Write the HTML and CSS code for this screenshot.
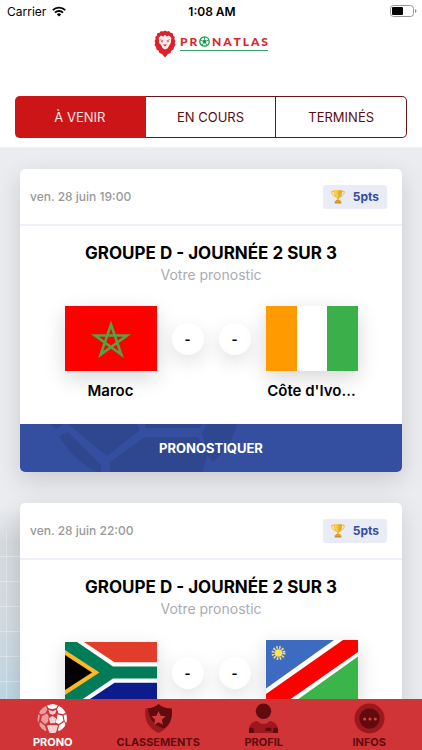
FILE: index.html
```html
<!DOCTYPE html>
<html lang="fr">
<head>
<meta charset="utf-8">
<meta name="viewport" content="width=device-width, initial-scale=1">
<title>Pronatlas</title>
<link rel="stylesheet" href="styles.css">
</head>
<body>
<svg class="defs" aria-hidden="true">
  <symbol id="trophy" viewBox="0 0 15 15">
    <path d="M3.600 2H.8c0 3 1 5 4 5.600M11.400 2h2.800c0 3-1 5-4 5.600" fill="none" stroke="#e9b83a" stroke-width="1"/>
    <path d="M3 .7h9c0 4.500-1 7.800-3.500 8.800v2h-2v-2C4 8.500 3 5.200 3 .700z" fill="#f7c331"/>
    <path d="M8 .7h4c0 4.500-1 7.800-3.500 8.800v2H8z" fill="#e8ad2c"/>
    <path d="M5.500 11.200h4l1 1.500h-6z" fill="#d99b26"/>
    <path d="M4 12.600h7V15H4z" fill="#c7912f"/>
    <path d="M5 1.700c.1 3 .6 4.700 1.500 5.800" fill="none" stroke="#fde08a" stroke-width=".8"/>
  </symbol>
</svg>

<header class="top">
  <div class="status">
    <span class="carrier">Carrier
      <svg class="wifi" viewBox="0 0 14 11" aria-hidden="true"><path d="M.8 4.200a8.800 8.800 0 0 1 12.400 0M3 6.600a5.700 5.700 0 0 1 8 0" fill="none" stroke="#000" stroke-width="1.900"/><path d="M7 10.600L4.800 8.400a3.100 3.100 0 0 1 4.400 0z"/></svg>
    </span>
    <span class="clock">1:08 AM</span>
    <svg class="battery" viewBox="0 0 27 12" aria-hidden="true"><rect x=".5" y=".5" width="23" height="11" rx="3" fill="#fff" stroke="#999"/><rect x="2" y="2" width="11" height="8" rx="1"/><path d="M25 4v4c2-.7 2-3.300 0-4z" fill="#999"/></svg>
  </div>
  <div class="logo">
    <svg class="lion" viewBox="0 0 22 28" aria-hidden="true">
      <path d="M11 .5L13 1.500 15 1 16.500 2.800 18.800 3.300 19 5.500 20.800 7 20.300 9 21.500 11 20.700 13 21.500 15 20 17 19.500 19.500 17.500 20.500 16.500 23 14 24 11 27.500 8 24 5.500 23 4.500 20.500 2.500 19.500 2 17 .5 15 1.300 13 .5 11 1.700 9 1.200 7 3 5.500 3.200 3.300 5.500 2.800 7 1 9 1.500z" fill="#dc2128"/>
      <path d="M7 5.500l2.200 1L11 4.800l1.800 1.700 2.200-1 2.300 2.200-.5 5.300-1.500 2.200-1.500 3L11 19.500l-2.300-1.300-1.500-3L5.200 13l-.5-5.300z" fill="#fbeeee"/>
      <path d="M6 9.600l3.500 1.300M16 9.600l-3.500 1.300" stroke="#dc2128" stroke-width=".6" fill="none"/>
      <path d="M7 11.300l2 .6M15 11.300l-2 .6" stroke="#5d9e78" stroke-width="1"/>
      <path d="M9 14.500h4l-2 2z" fill="#dc2128"/>
    </svg>
    <span class="wordmark"><span>P</span><span>R</span><svg class="logo-ball" viewBox="0 0 11 11" role="img" aria-label="O"><circle cx="5.500" cy="5.500" r="4.700" fill="#fff" stroke="#159a50" stroke-width="1.300"/><path d="M5.500 3.200l2.200 1.600-.8 2.600H4.100l-.8-2.600z" fill="#159a50"/><path d="M5.500 3.200V1M7.700 4.800l2.200-.7M6.900 7.400l1.400 2M4.100 7.400l-1.400 2M3.300 4.800l-2.200-.7" stroke="#159a50" stroke-width=".9"/></svg><span>N</span><span>A</span><span>T</span><span>L</span><span>A</span><span>S</span></span>
  </div>
  <div class="tabs">
    <button class="tab active" type="button">À VENIR</button>
    <button class="tab" type="button">EN COURS</button>
    <button class="tab" type="button">TERMINÉS</button>
  </div>
</header>

<main class="feed">
  <article class="card">
    <div class="card-head">
      <time>ven. 28 juin 19:00</time>
      <span class="points"><svg class="trophy" aria-hidden="true"><use href="#trophy"/></svg>5pts</span>
    </div>
    <div class="card-body">
      <h2>GROUPE D - JOURNÉE 2 SUR 3</h2>
      <p class="sub">Votre pronostic</p>
      <div class="match">
        <svg class="flag" viewBox="0 0 92 65" role="img" aria-label="Drapeau du Maroc"><path fill="#fe0000" d="M0 0h92v65H0z"/><path d="M46 18.500L56.300 48.500 30 29.500h32L35.700 48.500z" fill="none" stroke="#53a245" stroke-width="2.600"/></svg>
        <span class="score">-</span>
        <span class="score">-</span>
        <svg class="flag" viewBox="0 0 92 65" role="img" aria-label="Drapeau de la Côte d'Ivoire"><path fill="#fff" d="M0 0h92v65H0z"/><path fill="#ff9a00" d="M0 0h31v65H0z"/><path fill="#3bb04a" d="M61 0h31v65H61z"/></svg>
      </div>
      <div class="names"><span>Maroc</span><span>Côte d'Ivo...</span></div>
    </div>
    <button class="bet" type="button">
      <svg class="watermark" viewBox="0 0 226 49" aria-hidden="true"><path d="M30 0h14l-8 5zM48 0h69l3 6-33 26zM125 0h58l-3 4h-54zM125 13h52l5 5 5 15-5 16H90V38zM187 0h30c-3 15-12 28-24 38l-6-7-5-22zM39 12l9-4 33 33v8h-2C62 41 48 28 39 12z"/></svg>
      <span>PRONOSTIQUER</span>
    </button>
  </article>

  <article class="card">
    <div class="card-head">
      <time>ven. 28 juin 22:00</time>
      <span class="points"><svg class="trophy" aria-hidden="true"><use href="#trophy"/></svg>5pts</span>
    </div>
    <div class="card-body">
      <h2>GROUPE D - JOURNÉE 2 SUR 3</h2>
      <p class="sub">Votre pronostic</p>
      <div class="match">
        <svg class="flag short" viewBox="0 0 92 61" role="img" aria-label="Drapeau de l'Afrique du Sud">
          <path fill="#fff" d="M0 0h92v61H0z"/><path fill="#e23d2b" d="M19 0h73v20.300H49.500z"/><path fill="#0c1c8c" d="M19 61h73V40.700H49.500z"/>
          <path fill="#007c59" d="M0 0h12l36 24.400h44v12.200H48L12 61H0z"/><path fill="#fcb827" d="M0 8l34.500 22.500L0 53z"/><path fill="#000" d="M0 13l27 17.500L0 48z"/>
        </svg>
        <span class="score">-</span>
        <span class="score">-</span>
        <svg class="flag" viewBox="0 0 92 65" role="img" aria-label="Drapeau de la Namibie">
          <path fill="#fff" d="M0 0h92v65H0z"/><path fill="#3d6bc2" d="M0 0h68L0 48.500z"/><path fill="#3bb54a" d="M92 65V16.500L24 65z"/><path fill="#fe0000" d="M77 0h15v12L16 65H0V54z"/>
          <circle cx="12.500" cy="13" r="5.500" fill="none" stroke="#f4dc72" stroke-width="3" stroke-dasharray="1.500 1.380"/><circle cx="12.500" cy="13" r="3.800" fill="#ffe05a"/>
        </svg>
      </div>
    </div>
  </article>
</main>

<nav class="bottom">
  <a class="item current" href="#prono">
    <svg viewBox="0 0 32 32" aria-hidden="true">
      <g fill="#fff">
        <path d="M10.500 2.500L16 1l5.500 1.300-1.500 2.900-4 1.300-4.500-1.300z"/><path d="M22.600 3c3 1.400 5.500 4 7 7l-2.400 1.700-5-1.200-1.600-4.300z" />
        <path d="M20.800 11.700l5.500 1.400 1 5.200-4.600 3.400-4-1.700 2-4.500z"/><path d="M30.200 11.500c1 3 1 6.200-.1 9.300l-1.700-2.800-.9-5z"/><path d="M23 23l5.200-3.700 1.100 3.500c-1.400 2.800-3.700 4.900-6.500 6.100L21.500 28z"/>
      </g>
      <g fill="#fff" opacity=".78"><path d="M12 22.800h8l1.700.8-1.500 4.800-1 2.200c-2.100.4-4.200.4-6.300 0l-1-2.200-1.500-4.800z"/><path d="M16 13.300l3.800 2.500-1.500 5h-4.600l-1.500-5z"/><path d="M11.800 7l4.200 1.400L20 7l-1.200 4-2.800 1-2.800-1z"/></g>
      <g fill="#fff" opacity=".52"><path d="M9.300 3.100l1.200 3.300L8.800 10.500l-5 1.300-1.600-2C3.700 6.900 6.300 4.400 9.300 3.100z"/><path d="M10.500 10.900l1.500 3-.5 5.500-3 2.600-4.300-3.700.8-5z"/><path d="M1.700 11.400L3 13l-.9 5-1 2.500c-.8-3-.6-6.200.6-9.100z"/><path d="M3 19.600L8.200 23.500l1.600 5L8.500 29C5.800 27.600 3.600 25.300 2.400 22.500z"/></g>
    </svg>
    <span>PRONO</span>
  </a>
  <a class="item" href="#classements">
    <svg viewBox="0 0 32 32" aria-hidden="true"><path d="M16 1c3 3.200 8 4.800 13.500 4.600C31 17 27 26 16 31 5 26 1 17 2.500 5.600 8 5.800 13 4.200 16 1z" fill="#9b191c"/><path d="M16 1c3 3.200 8 4.800 13.500 4.600C31 15 28 22 22 26 13 25 6.500 18 5 5.500 9.500 5.200 13.500 3.800 16 1z" fill="#620b0e"/><path d="M16 8.500l2.200 4.700 5.200.6-3.900 3.500 1.100 5.200L16 19.900l-4.600 2.600 1.100-5.200-3.900-3.500 5.200-.6z" fill="#d43a3b"/></svg>
    <span>CLASSEMENTS</span>
  </a>
  <a class="item" href="#profil">
    <svg viewBox="0 0 32 32" aria-hidden="true"><circle cx="16" cy="8.500" r="8" fill="#620b0e"/><path d="M1 31v-4c0-5 4-8 9-8.500 2 4 10 4 12 0 5 .5 9 3.500 9 8.500v4z" fill="#9b191c"/><path d="M1 31v-4c1-2.500 5-2 5 1v3zM31 31v-4c-1-2.500-5-2-5 1v3zM18 25.500h6V29h-6z" fill="#620b0e"/></svg>
    <span>PROFIL</span>
  </a>
  <a class="item" href="#infos">
    <svg viewBox="0 0 32 32" aria-hidden="true"><circle cx="16" cy="16" r="15.500" fill="#9b191c"/><circle cx="16" cy="16" r="10.500" fill="#620b0e"/><g fill="#d04142"><circle cx="11" cy="16.500" r="1.600"/><circle cx="16.500" cy="16.500" r="1.600"/><circle cx="22" cy="16.500" r="1.600"/></g></svg>
    <span>INFOS</span>
  </a>
</nav>
</body>
</html>
```
FILE: styles.css
```css
* { box-sizing: border-box; }

body {
  margin: 0;
  height: 100vh;
  display: flex;
  flex-direction: column;
  overflow: hidden;
  background: #ebecf0;
  color: #000;
  font-family: Inter, "Liberation Sans", sans-serif;
}

button { font: inherit; border: 0; margin: 0; padding: 0; cursor: pointer; }
.defs { position: absolute; width: 0; height: 0; }

.top { flex: none; background: #fff; padding-bottom: 9px; }

.status {
  display: grid;
  grid-template-columns: 1fr auto 1fr;
  align-items: center;
  height: 22px;
  padding: 0 5px 0 7px;
  font-size: 12px;
}
.carrier { display: flex; align-items: center; gap: 6px; }
.wifi { width: 14px; height: 11px; }
.clock { font-weight: 600; }
.battery { width: 27px; height: 12px; justify-self: end; }

.logo {
  display: flex;
  justify-content: center;
  gap: 4px;
  height: 74px;
  padding-top: 8px;
}
.lion { width: 22px; height: 28px; }
.wordmark {
  display: flex;
  align-items: center;
  justify-content: space-between;
  width: 88px;
  height: 21px;
  padding-top: 3px;
  border-bottom: 1px solid #3da46b;
  color: #d8262c;
  font-family: Lato, sans-serif;
  font-size: 12px;
  font-weight: 900;
}
.logo-ball { width: 11px; height: 11px; }

.tabs {
  display: grid;
  grid-template-columns: repeat(3, 1fr);
  height: 42px;
  margin: 0 15px;
}
.tab {
  border: 1px solid #6b1418;
  border-left: 0;
  background: #fff;
  color: #5c0d11;
  font-size: 13px;
}
.tab:first-child { border-radius: 5px 0 0 5px; }
.tab:last-child { border-radius: 0 5px 5px 0; }
.tab.active { border-color: #cb1517; background: #cb1517; color: #fde9e9; }

.feed {
  flex: 1;
  min-height: 0;
  overflow: hidden;
  padding: 22px 20px 0;
  background:
    repeating-linear-gradient(to bottom, transparent 0, transparent 24px, rgba(255, 255, 255, 0.35) 24px, rgba(255, 255, 255, 0.35) 25px) 0 385px / 20px 100% no-repeat,
    linear-gradient(to right, transparent 6px, rgba(255, 255, 255, 0.35) 6px, rgba(255, 255, 255, 0.35) 7px, transparent 7px) 0 385px / 20px 100% no-repeat,
    linear-gradient(to bottom, transparent 360px, #d6dade 395px, #d3dbe1 470px, #bfd6e4 550px) 0 0 / 20px 100% no-repeat,
    #ebecf0;
}

.card {
  margin-bottom: 31px;
  background: #fff;
  border-radius: 5px;
  box-shadow: 0 8px 24px rgba(0, 0, 0, 0.14);
}
.card-head {
  display: flex;
  align-items: center;
  justify-content: space-between;
  height: 57px;
  padding: 0 15px 0 10px;
  border-bottom: 2px solid #eff0f9;
}
time { color: #999; font-size: 12px; font-weight: 500; }
.points {
  display: flex;
  align-items: center;
  gap: 8px;
  height: 24px;
  padding: 0 8px;
  border-radius: 3px;
  background: #e9ebf5;
  color: #354e9e;
  font-size: 12px;
  font-weight: 700;
}
.trophy { width: 14px; height: 15px; }

.card-body { padding: 16px 0 23px; text-align: center; }
h2 { margin: 0; font-size: 17px; line-height: 22px; font-weight: 700; }
.sub { margin: 0; color: #aaabb2; font-size: 14px; line-height: 22px; }
.match {
  display: flex;
  align-items: center;
  justify-content: center;
  gap: 15px;
  height: 65px;
  margin-top: 20px;
}
.flag { width: 92px; height: 65px; box-shadow: 0 7px 20px rgba(0, 0, 0, 0.16); }
.flag.short { height: 61px; }
.score {
  width: 32px;
  border-radius: 50%;
  background: #fff;
  box-shadow: 0 7px 20px rgba(0, 0, 0, 0.12);
  font-size: 13px;
  line-height: 32px;
  font-weight: 700;
}
.names {
  display: flex;
  justify-content: center;
  gap: 101px;
  margin-top: 10px;
  font-size: 15px;
  line-height: 20px;
  font-weight: 600;
}
.names span { width: 100px; white-space: nowrap; }

.bet {
  position: relative;
  display: block;
  width: 100%;
  height: 48px;
  border-radius: 0 0 5px 5px;
  overflow: hidden;
  background: #344f9f;
  color: #fff;
  font-size: 13px;
  font-weight: 700;
}
.bet span { position: relative; }
.watermark { position: absolute; left: 0; top: 0; width: 226px; height: 49px; fill: #2f478f; }

.bottom {
  position: fixed;
  left: 0;
  right: 0;
  bottom: 0;
  display: grid;
  grid-template-columns: repeat(4, 1fr);
  height: 51px;
  background: #d03436;
}
.item {
  display: flex;
  flex-direction: column;
  align-items: center;
  padding-top: 4px;
  color: #620b0e;
  font-size: 11px;
  line-height: 16px;
  font-weight: 700;
  text-decoration: none;
}
.item svg { width: 31px; height: 31px; }
.item.current { color: #fff; }
```
